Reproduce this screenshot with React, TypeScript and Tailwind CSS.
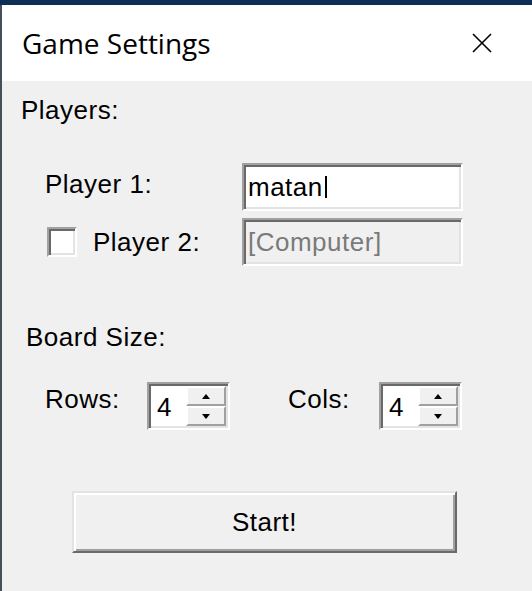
import React from "react";

const sunken =
  "border-2 border-t-[#a0a0a0] border-l-[#a0a0a0] border-b-white border-r-white shadow-[inset_2px_2px_0_#696969,inset_-2px_-2px_0_#e3e3e3]";
const raised =
  "border-2 border-t-[#e3e3e3] border-l-[#e3e3e3] border-b-[#696969] border-r-[#696969] shadow-[inset_2px_2px_0_#ffffff,inset_-2px_-2px_0_#a0a0a0]";

function Spinner({ value }: { value: string }) {
  return (
    <div className={`w-[83px] h-[48px] flex bg-white p-[2px] ${sunken}`}>
      <div className="flex-1 flex items-center pl-[6px] pt-[2px] bg-white">
        <span>{value}</span>
      </div>
      <div className="w-[40px] flex flex-col">
        <div className="flex-1 flex items-center justify-center bg-[#f0f0f0] border-t-2 border-l-2 border-t-white border-l-white border-b-2 border-r-2 border-b-[#a0a0a0] border-r-[#a0a0a0]">
          <svg width="8" height="5" viewBox="0 0 8 5">
            <polygon points="4,0 8,5 0,5" fill="#000" />
          </svg>
        </div>
        <div className="flex-1 flex items-center justify-center bg-[#f0f0f0] border-t-2 border-l-2 border-t-white border-l-white border-b-2 border-r-2 border-b-[#a0a0a0] border-r-[#a0a0a0]">
          <svg width="8" height="5" viewBox="0 0 8 5">
            <polygon points="0,0 8,0 4,5" fill="#000" />
          </svg>
        </div>
      </div>
    </div>
  );
}

export default function App() {
  return (
    <div className="w-[532px] h-[591px] flex flex-col overflow-hidden bg-[#f0f0f0]">
      <div className="h-[5px] shrink-0 bg-[#0e2f55]" />
      <div className="flex flex-1">
        <div className="w-[2px] bg-[#46505b]" />
        <div className="flex-1 flex flex-col">
          <div className="h-[76px] shrink-0 bg-white flex items-center justify-between pl-[20px] pr-[40px]">
            <span className="text-[28px] text-black font-['Open_Sans',sans-serif] leading-none">
              Game Settings
            </span>
            <svg width="20" height="20" viewBox="0 0 20 20">
              <path d="M1 1 L19 19 M19 1 L1 19" stroke="#000" strokeWidth="1.6" fill="none" />
            </svg>
          </div>
          <div className="flex-1 flex flex-col text-black text-[26px] leading-[26px] tracking-[0.5px] font-['Liberation_Sans',Arial,sans-serif]">
            <div className="mt-[16px] ml-[19px]">Players:</div>
            <div className="mt-[40px] ml-[43px] flex">
              <div className="w-[197px] mt-[8px]">Player 1:</div>
              <div className={`w-[221px] h-[48px] bg-white flex items-center pl-[4px] ${sunken}`}>
                <span>matan</span>
                <span className="inline-block w-[2px] h-[22px] bg-black ml-[2px]" />
              </div>
            </div>
            <div className="mt-[7px] ml-[45px] flex items-center">
              <div className="w-[195px] flex items-center">
                <div className={`w-[30px] h-[30px] bg-white ${sunken}`} />
                <span className="ml-[16px]">Player 2:</span>
              </div>
              <div className={`w-[221px] h-[48px] bg-[#f0f0f0] flex items-center pl-[4px] text-[#7a7a7a] ${sunken}`}>
                <span>[Computer]</span>
              </div>
            </div>
            <div className="mt-[58px] ml-[24px]">Board Size:</div>
            <div className="mt-[32px] ml-[43px] flex items-start">
              <div className="w-[102px] mt-[4px]">Rows:</div>
              <Spinner value="4" />
              <div className="ml-[58px] w-[91px] mt-[4px]">Cols:</div>
              <Spinner value="4" />
            </div>
            <div className="mt-[61px] ml-[70px]">
              <div className={`w-[385px] h-[62px] bg-[#f0f0f0] flex items-center justify-center ${raised}`}>
                Start!
              </div>
            </div>
          </div>
        </div>
      </div>
    </div>
  );
}
